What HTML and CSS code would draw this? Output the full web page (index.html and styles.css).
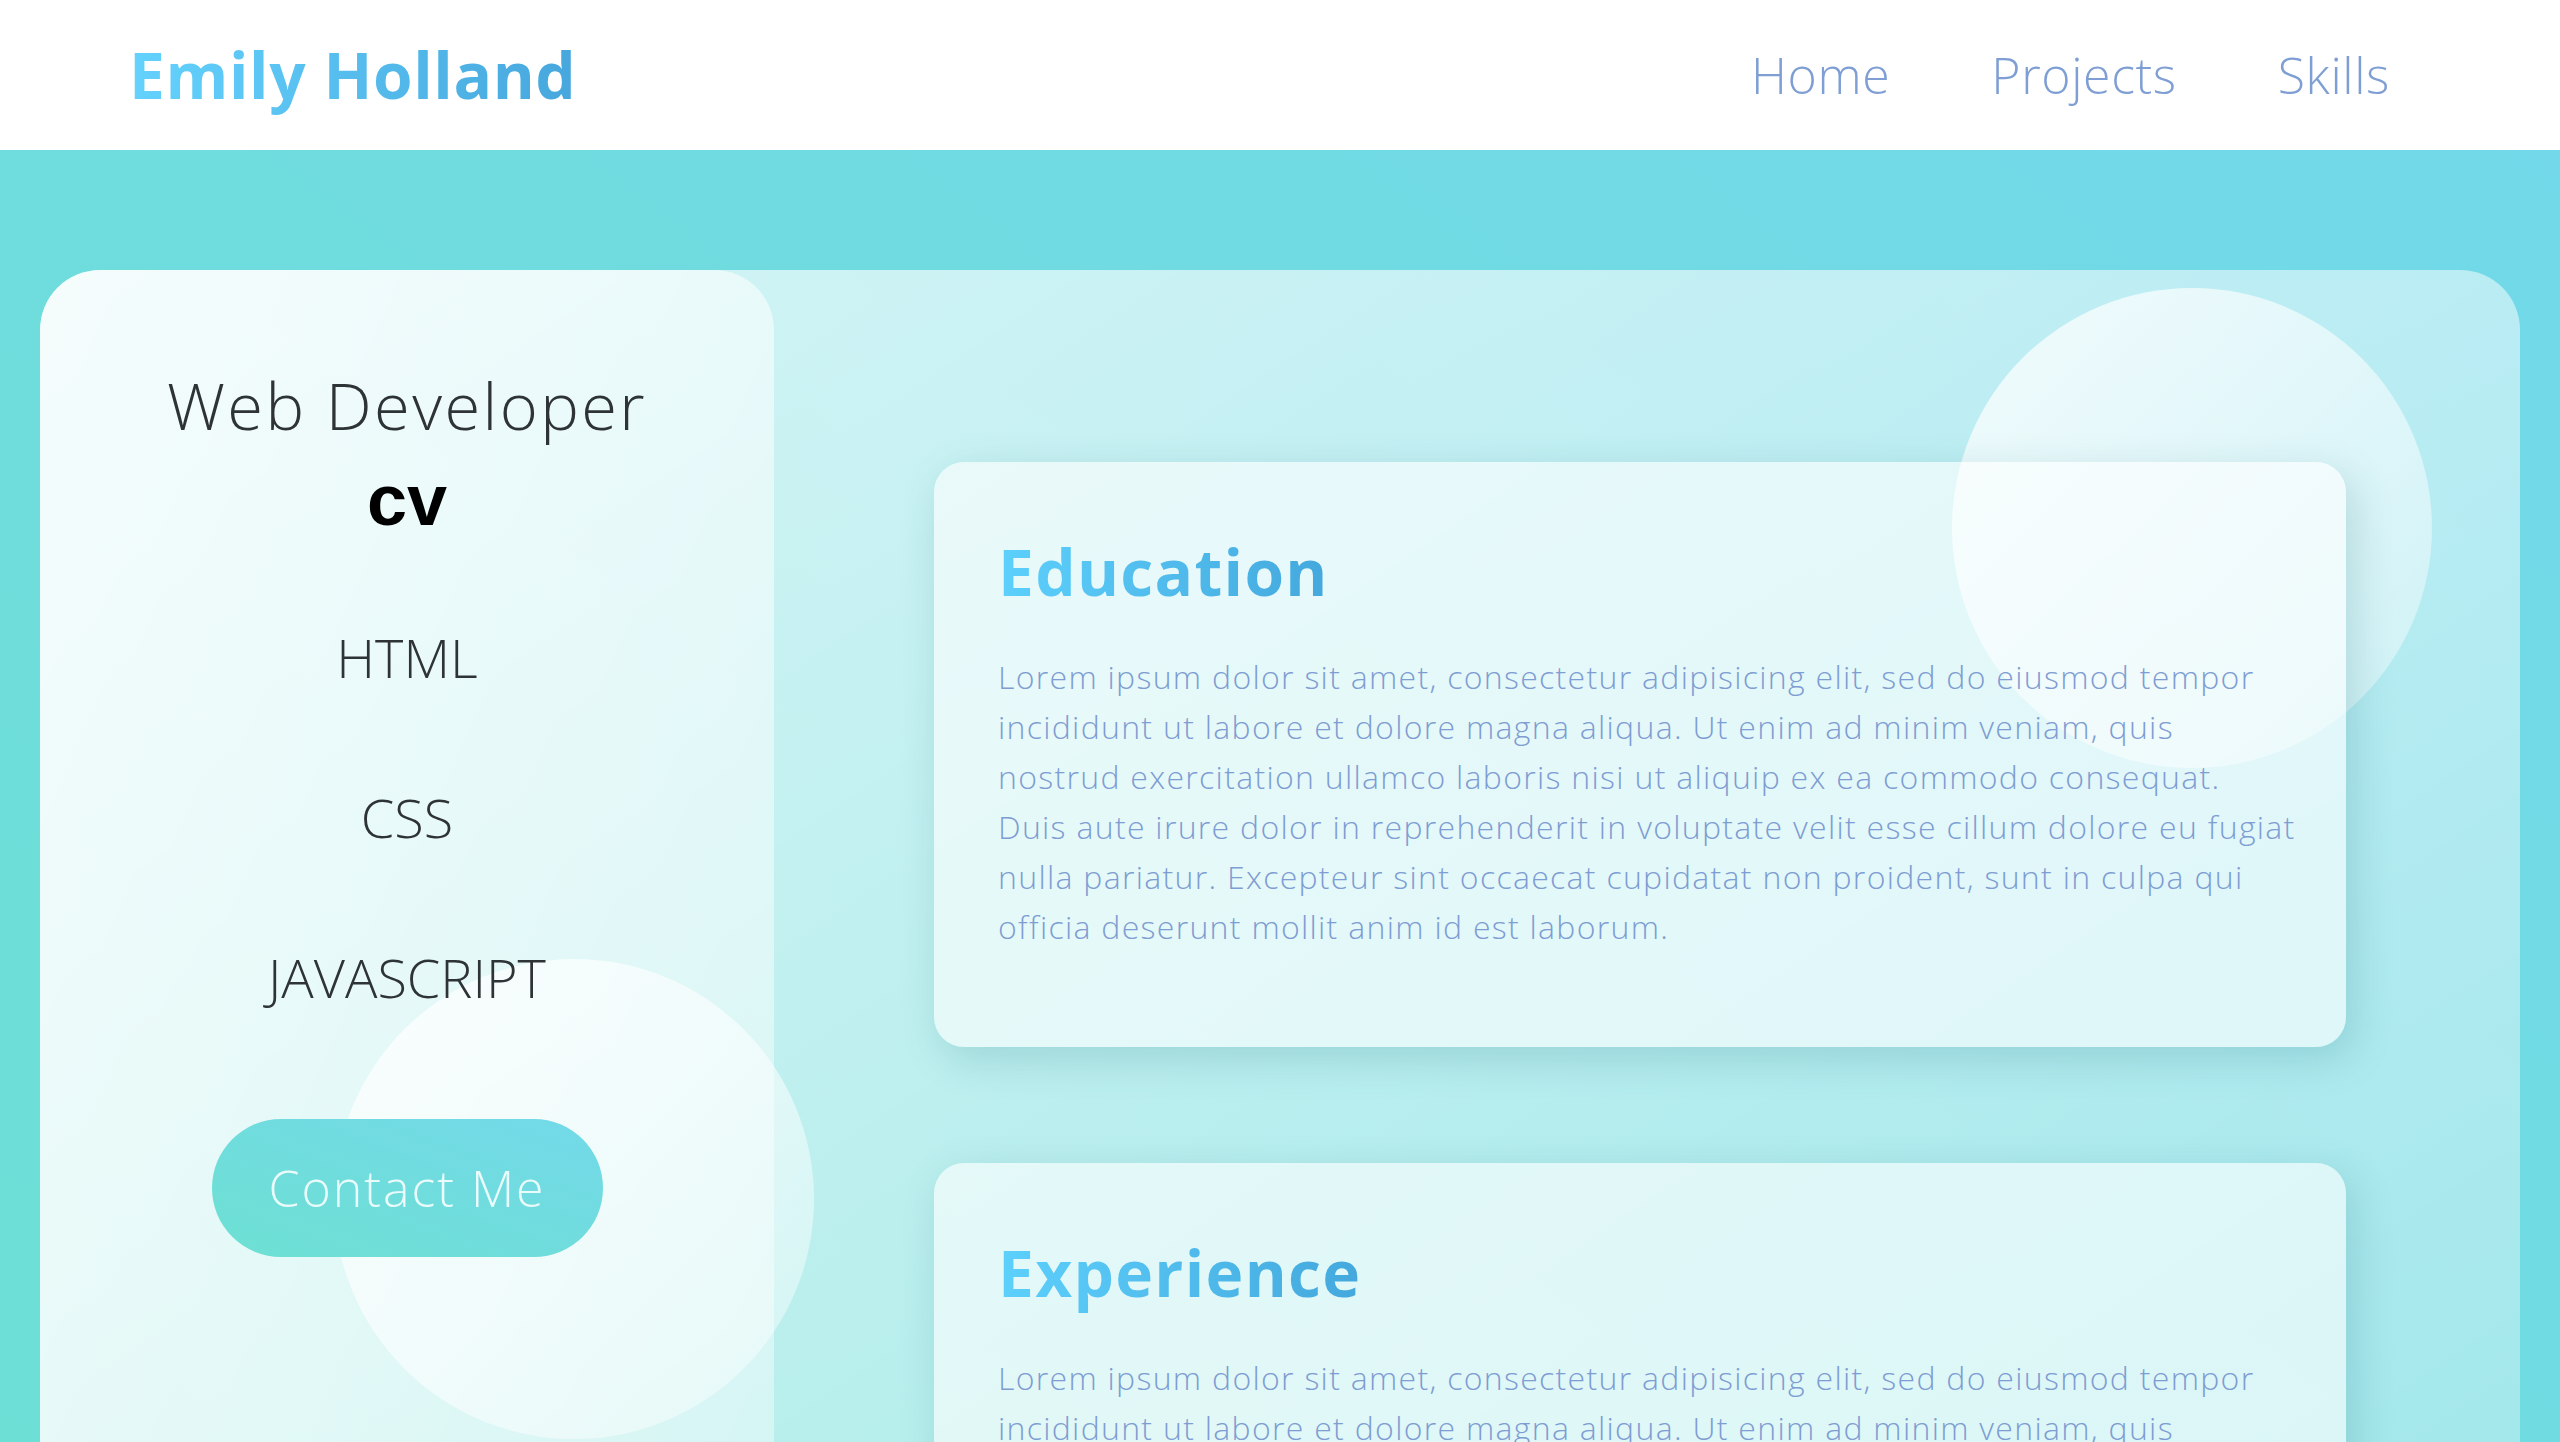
FILE: index.html
```html
<!DOCTYPE html>
<html lang="en">
<head>
<meta charset="utf-8">
<title>Emily Holland</title>
<link rel="stylesheet" href="styles.css">
</head>
<body>
<header class="topbar">
  <h1 class="logo">Emily Holland</h1>
  <nav class="nav">
    <a href="#" class="nav-link">Home</a>
    <a href="#" class="nav-link">Projects</a>
    <a href="#" class="nav-link">Skills</a>
  </nav>
</header>
<main class="page">
  <section class="glass">
    <aside class="sidebar">
      <h2 class="role">Web Developer</h2>
      <h3 class="cv">cv</h3>
      <ul class="skills">
        <li class="skill">HTML</li>
        <li class="skill">CSS</li>
        <li class="skill">JAVASCRIPT</li>
      </ul>
      <a href="#" class="contact">Contact Me</a>
    </aside>
    <div class="circle circle-bottom"></div>
    <div class="circle circle-top"></div>
    <div class="content">
      <article class="card">
        <h2 class="card-title">Education</h2>
        <p class="card-text">Lorem ipsum dolor sit amet, consectetur adipisicing elit, sed do eiusmod tempor<br>
        incididunt ut labore et dolore magna aliqua. Ut enim ad minim veniam, quis<br>
        nostrud exercitation ullamco laboris nisi ut aliquip ex ea commodo consequat.<br>
        Duis aute irure dolor in reprehenderit in voluptate velit esse cillum dolore eu fugiat<br>
        nulla pariatur. Excepteur sint occaecat cupidatat non proident, sunt in culpa qui<br>
        officia deserunt mollit anim id est laborum.</p>
      </article>
      <article class="card">
        <h2 class="card-title">Experience</h2>
        <p class="card-text">Lorem ipsum dolor sit amet, consectetur adipisicing elit, sed do eiusmod tempor<br>
        incididunt ut labore et dolore magna aliqua. Ut enim ad minim veniam, quis<br>
        nostrud exercitation ullamco laboris nisi ut aliquip ex ea commodo consequat.<br>
        Duis aute irure dolor in reprehenderit in voluptate velit esse cillum dolore eu fugiat<br>
        nulla pariatur. Excepteur sint occaecat cupidatat non proident, sunt in culpa qui<br>
        officia deserunt mollit anim id est laborum.</p>
      </article>
    </div>
  </section>
</main>
</body>
</html>
```
FILE: styles.css
```css
* { box-sizing: border-box; }
html, body { margin: 0; padding: 0; }
body {
  font-family: "Open Sans", "Lato", sans-serif;
  font-weight: 300;
  background: linear-gradient(to right top, #6ce0d2, #72d8ea);
  min-height: 100vh;
}
.topbar {
  height: 150px;
  background: #fff;
  display: flex;
  align-items: center;
  justify-content: space-between;
  padding: 0 170px 0 129px;
}
.logo {
  margin: 0;
  font-size: 64px;
  font-weight: 700;
  line-height: 80px;
  letter-spacing: 0.6px;
  background: linear-gradient(to right, #64d2fd, #47a7dd);
  -webkit-background-clip: text;
  background-clip: text;
  color: transparent;
}
.nav { display: flex; gap: 101px; }
.nav-link {
  font-size: 50px;
  line-height: 60px;
  font-weight: 300;
  letter-spacing: 0.6px;
  color: #7f9fd4;
  text-decoration: none;
}
.page { padding: 120px 40px 0; }
.glass {
  position: relative;
  display: flex;
  border-radius: 60px;
  background: linear-gradient(to right bottom, rgba(255,255,255,0.72), rgba(255,255,255,0.3));
  min-height: 1400px;
  overflow: hidden;
}
.sidebar {
  width: 734px;
  flex: none;
  border-radius: 60px;
  background: linear-gradient(to right bottom, rgba(255,255,255,0.75), rgba(255,255,255,0.35));
  display: flex;
  flex-direction: column;
  align-items: center;
  padding-top: 95px;
}
.role {
  position: relative; z-index: 2;
  margin: 0;
  font-size: 65px;
  line-height: 80px;
  font-weight: 300;
  letter-spacing: 2.4px;
  color: #2e3335;
}
.cv {
  position: relative; z-index: 2;
  margin: 15px 0 0;
  font-family: "Liberation Sans", Arial, sans-serif;
  font-weight: 700;
  font-size: 72px;
  line-height: 80px;
  color: #000;
}
.skills {
  position: relative; z-index: 2;
  list-style: none;
  margin: 82px 0 0;
  padding: 0;
  display: flex;
  flex-direction: column;
  align-items: center;
  gap: 90px;
}
.skill {
  font-size: 54px;
  line-height: 70px;
  font-weight: 300;
  color: #2e3335;
}
.contact {
  position: relative; z-index: 2;
  margin-top: 107px;
  width: 391px;
  height: 138px;
  border-radius: 69px;
  display: flex;
  align-items: center;
  justify-content: center;
  background: linear-gradient(to right top, #6de0d2, #73d9e9);
  color: #eafbfb;
  font-size: 50px;
  font-weight: 300;
  letter-spacing: 2px;
  text-decoration: none;
}
.circle {
  position: absolute;
  z-index: 1;
  width: 480px;
  height: 480px;
  border-radius: 50%;
  background: linear-gradient(to right bottom, rgba(255,255,255,0.78), rgba(255,255,255,0.35));
}
.circle-bottom { left: 294px; top: 689px; }
.circle-top { left: 1912px; top: 18px; }
.content {
  position: relative;
  z-index: 2;
  flex: 1;
  padding: 192px 0 192px 160px;
  display: flex;
  flex-direction: column;
  gap: 116px;
}
.card {
  width: 1412px;
  border-radius: 30px;
  background: rgba(255,255,255,0.6);
  box-shadow: 8px 12px 40px rgba(30,110,120,0.2);
  padding: 70px 20px 95px 64px;
}
.card-title {
  margin: 0;
  font-size: 64px;
  line-height: 80px;
  font-weight: 700;
  letter-spacing: 1.3px;
  background: linear-gradient(to right, #5dd0fc, #44a8dd);
  -webkit-background-clip: text;
  background-clip: text;
  color: transparent;
  display: inline-block;
}
.card-text {
  margin: 40px 0 0;
  font-size: 32px;
  line-height: 50px;
  font-weight: 300;
  letter-spacing: 1.3px;
  color: #7e9dd2;
}
```
